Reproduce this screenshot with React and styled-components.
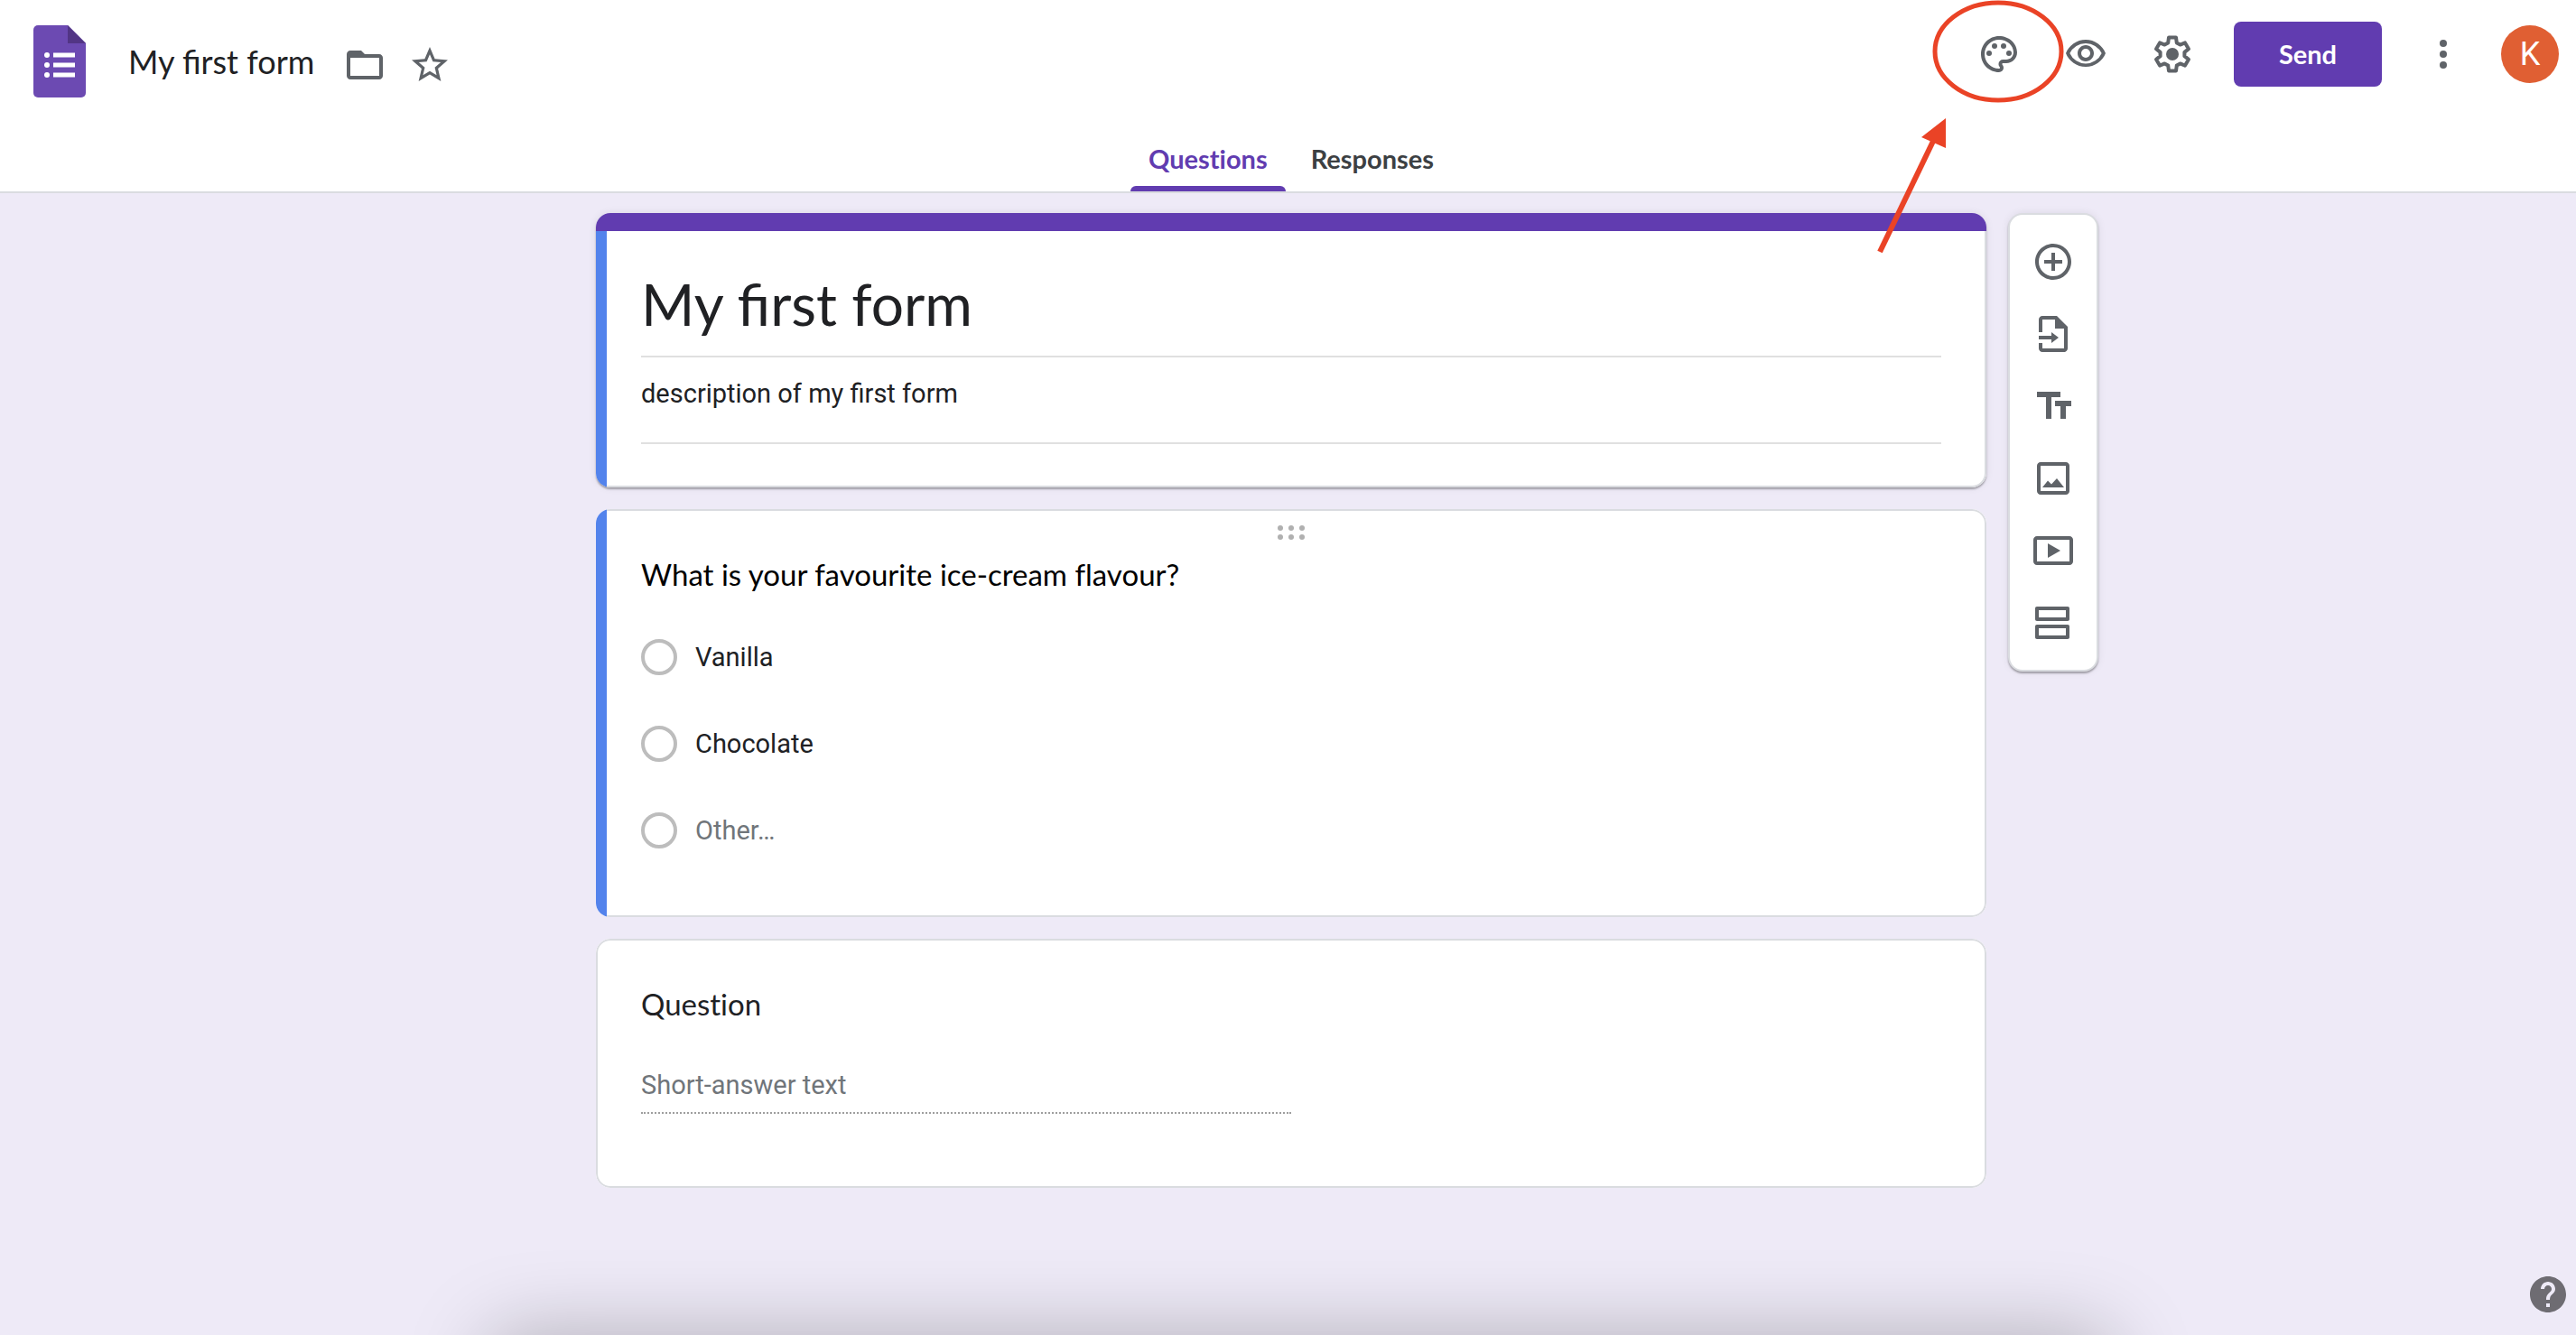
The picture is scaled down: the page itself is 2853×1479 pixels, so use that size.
import React, { useState } from "react";
import styled, { createGlobalStyle, css } from "styled-components";

const color = {
  page: "#eeeaf7",
  surface: "#ffffff",
  accent: "#613cb0",
  selected: "#5383ec",
  border: "#dadce0",
  text: "#202124",
  tabText: "#3c4043",
  muted: "#70757a",
  icon: "#5f6368",
  marker: "#ea4326",
  avatar: "#e05f33",
};

const display = `Lato, "Open Sans", sans-serif`;
const body = `Roboto, "Noto Sans", sans-serif`;

const GlobalStyle = createGlobalStyle`
  *, *::before, *::after { box-sizing: border-box; }
  body { margin: 0; background: ${color.page}; color: ${color.text}; font-family: ${body}; }
  button, input { font: inherit; color: inherit; margin: 0; }
`;

const Page = styled.div`
  position: relative;
  min-height: 100vh;
  overflow: hidden;
`;

const Header = styled.header`
  background: ${color.surface};
  border-bottom: 2px solid ${color.border};
`;

const TopBar = styled.div`
  display: flex;
  justify-content: space-between;
  align-items: flex-start;
  height: 148px;
  padding: 0 19px 0 37px;
`;

const DocumentInfo = styled.div`
  display: flex;
  align-items: center;
  padding-top: 28px;
`;

const HomeLink = styled.a`
  display: block;
  width: 58px;
  height: 80px;
  margin-right: 47px;
`;

const DocumentTitle = styled.input`
  field-sizing: content;
  padding: 0;
  border: 0;
  outline: 0;
  background: transparent;
  font: 400 36px/48px ${display};
`;

const DocumentTools = styled.div`
  display: flex;
  gap: 24px;
  padding-top: 8px;
  margin-left: 32px;
`;

const Actions = styled.div`
  display: flex;
  align-items: center;
  gap: 44px;
  height: 120px;
`;

const ActionIcons = styled.div`
  display: flex;
  gap: 48px;
`;

const Account = styled.div`
  display: flex;
  align-items: center;
  gap: 40px;
`;

const IconButton = styled.button`
  display: flex;
  align-items: center;
  justify-content: center;
  width: ${(p) => p.$width || 48}px;
  height: ${(p) => p.$height || 48}px;
  padding: 0;
  border: 0;
  background: transparent;
  color: ${color.icon};
  cursor: pointer;
`;

const Svg = styled.svg`
  display: block;
  width: 48px;
  height: 48px;
  fill: currentColor;
`;

const SendButton = styled.button`
  width: 164px;
  height: 72px;
  padding: 0;
  border: 0;
  border-radius: 8px;
  background: ${color.accent};
  color: #fff;
  font: 700 29px/40px ${display};
  cursor: pointer;
`;

const Avatar = styled.button`
  width: 64px;
  height: 64px;
  padding: 0;
  border: 0;
  border-radius: 50%;
  background: ${color.avatar};
  color: #fff;
  font: 400 36px/64px ${body};
  cursor: pointer;
`;

const Tabs = styled.nav`
  display: flex;
  justify-content: center;
  gap: 8px;
  height: 64px;
  padding-left: 7px;
`;

const Tab = styled.a`
  position: relative;
  display: flex;
  align-items: center;
  padding: 0 20px 8px;
  color: ${(p) => (p.$active ? color.accent : color.tabText)};
  font: 700 29px/40px ${display};
  font-variant-ligatures: none;
  text-decoration: none;
  ${(p) =>
    p.$active &&
    css`
      &::after {
        content: "";
        position: absolute;
        left: 0;
        right: 0;
        bottom: 0;
        height: 6px;
        border-radius: 6px 6px 0 0;
        background: ${color.accent};
      }
    `}
`;

const Workspace = styled.main`
  display: grid;
  grid-template-columns: 1fr minmax(0, 1540px) 1fr;
  align-items: start;
  padding: 22px 0 24px 7px;
`;

const Cards = styled.div`
  grid-column: 2;
  display: flex;
  flex-direction: column;
  gap: 24px;
`;

const raised = css`
  box-shadow: 0 2px 2px rgba(0, 0, 0, 0.3), 0 0 10px rgba(0, 0, 0, 0.08);
`;

const Card = styled.section`
  display: grid;
  grid-template-columns: ${(p) => (p.$marked ? "12px 1fr" : "1fr")};
  overflow: hidden;
  border-radius: 16px;
  background: ${color.surface};
  ${(p) => p.$raised && raised}
`;

const ThemeBar = styled.div`
  grid-column: 1 / -1;
  height: 20px;
  background: ${color.accent};
`;

const Marker = styled.div`
  background: ${color.selected};
`;

const HeadBody = styled.div`
  padding: 40px 48px 46px 38px;
  border: solid ${color.border};
  border-width: 0 2px 2px 0;
  border-radius: 0 0 16px 0;
`;

const ChoiceBody = styled.div`
  padding: 16px 48px 74px 38px;
  border: solid ${color.border};
  border-width: 2px 2px 2px 0;
  border-radius: 0 16px 16px 0;
`;

const ShortBody = styled.div`
  padding: 46px 48px 80px;
  border: 2px solid ${color.border};
  border-radius: 16px;
`;

const LineInput = styled.input`
  display: block;
  width: 100%;
  padding: 0;
  border: 0;
  border-bottom: 2px solid #e0e0e0;
  outline: 0;
  background: transparent;
`;

const FormTitle = styled(LineInput)`
  height: 100px;
  padding-bottom: 18px;
  font: 400 64px/80px ${display};
`;

const FormDescription = styled(LineInput)`
  height: 76px;
  margin-top: 20px;
  padding-bottom: 34px;
  font: 400 29px/40px ${body};
`;

const DragHandle = styled.button`
  display: block;
  width: 30px;
  height: 16px;
  margin: 0 auto 14px;
  padding: 0;
  border: 0;
  background: transparent;
  color: #b0b0b0;
  cursor: move;
`;

const HandleDots = styled.svg`
  display: block;
  width: 30px;
  height: 16px;
  fill: currentColor;
`;

const QuestionTitle = styled.h2`
  margin: 0;
  color: ${(p) => (p.$strong ? "#000" : color.text)};
  font: 400 33px/48px ${display};
  font-variant-ligatures: none;
`;

const Options = styled.div`
  display: flex;
  flex-direction: column;
  align-items: flex-start;
  gap: 56px;
  margin-top: 48px;
`;

const Option = styled.label`
  display: flex;
  align-items: center;
  gap: 20px;
  color: ${(p) => (p.$muted ? color.muted : color.text)};
  font: 400 29px/40px ${body};
`;

const Radio = styled.input`
  appearance: none;
  width: 40px;
  height: 40px;
  border: 4px solid #bdbdbd;
  border-radius: 50%;
  background: ${color.surface};
  &:checked {
    border-color: ${color.accent};
    background: radial-gradient(${color.accent} 0 9px, transparent 10px);
  }
`;

const ShortAnswer = styled(LineInput)`
  width: 50%;
  height: 52px;
  margin-top: 46px;
  padding-bottom: 10px;
  border-bottom: 2px dotted #9e9e9e;
  font: 400 29px/40px ${body};
  &::placeholder {
    color: ${color.muted};
    opacity: 1;
  }
`;

const Toolbox = styled.aside`
  grid-column: 3;
  justify-self: start;
  display: flex;
  flex-direction: column;
  margin-left: 24px;
  padding: 12px 18px;
  border: 2px solid ${color.border};
  border-radius: 16px;
  background: ${color.surface};
  ${raised}
`;

const HelpButton = styled(IconButton)`
  position: fixed;
  right: 7px;
  bottom: 21px;
  color: #6e6c72;
`;

const BottomShade = styled.div`
  position: fixed;
  top: 100%;
  left: 19%;
  right: 18%;
  height: 120px;
  border-radius: 24px;
  box-shadow: 0 0 90px rgba(0, 0, 0, 0.26);
  pointer-events: none;
`;

const Annotation = styled.svg`
  position: absolute;
  top: 0;
  right: 563px;
  width: 220px;
  height: 290px;
  pointer-events: none;
`;

const Icon = ({ children }) => (
  <Svg viewBox="0 0 24 24" aria-hidden="true">
    {children}
  </Svg>
);

const FolderIcon = () => (
  <Icon>
    <path d="M20 6h-8l-2-2H4c-1.1 0-2 .9-2 2v12c0 1.1.9 2 2 2h16c1.1 0 2-.9 2-2V8c0-1.1-.9-2-2-2zm0 12H4V8h16v10z" />
  </Icon>
);

const StarIcon = () => (
  <Icon>
    <path d="M22 9.24l-7.19-.62L12 2 9.19 8.63 2 9.24l5.46 4.73L5.82 21 12 17.27 18.18 21l-1.63-7.03L22 9.24zM12 15.4l-3.76 2.27 1-4.28-3.32-2.88 4.38-.38L12 6.1l1.71 4.04 4.38.38-3.32 2.88 1 4.28L12 15.4z" />
  </Icon>
);

const PaletteIcon = () => (
  <Icon>
    <path d="M12 22C6.49 22 2 17.51 2 12S6.49 2 12 2s10 4.04 10 9c0 3.31-2.69 6-6 6h-1.77c-.28 0-.5.22-.5.5 0 .12.05.23.13.33.41.47.64 1.06.64 1.67A2.5 2.5 0 0 1 12 22zm0-18c-4.41 0-8 3.59-8 8s3.59 8 8 8c.28 0 .5-.22.5-.5a.54.54 0 0 0-.14-.35c-.41-.46-.63-1.05-.63-1.65a2.5 2.5 0 0 1 2.5-2.5H16c2.21 0 4-1.79 4-4 0-3.86-3.59-7-8-7z" />
    <circle cx="6.5" cy="11.5" r="1.5" />
    <circle cx="9.5" cy="7.5" r="1.5" />
    <circle cx="14.5" cy="7.5" r="1.5" />
    <circle cx="17.5" cy="11.5" r="1.5" />
  </Icon>
);

const EyeIcon = () => (
  <Icon>
    <path d="M12 6a9.77 9.77 0 0 1 8.82 5.5 9.647 9.647 0 0 1-17.64 0A9.77 9.77 0 0 1 12 6m0-2C7 4 2.73 7.11 1 11.5 2.73 15.89 7 19 12 19s9.27-3.11 11-7.5C21.27 7.11 17 4 12 4zm0 5a2.5 2.5 0 0 1 0 5 2.5 2.5 0 0 1 0-5m0-2c-2.48 0-4.5 2.02-4.5 4.5S9.52 16 12 16s4.5-2.02 4.5-4.5S14.48 7 12 7z" />
  </Icon>
);

const GearIcon = () => (
  <Icon>
    <path
      fill="none"
      stroke="currentColor"
      strokeWidth="2"
      strokeLinejoin="round"
      d="M10 2.8H14L14.4 5.7L16.3 6.8L19 5.7L21 9.1L18.7 10.9V13.1L21 14.9L19 18.3L16.3 17.2L14.4 18.3L14 21.2H10L9.6 18.3L7.7 17.2L5 18.3L3 14.9L5.3 13.1V10.9L3 9.1L5 5.7L7.7 6.8L9.6 5.7Z"
    />
    <circle cx="12" cy="12" r="3.5" />
  </Icon>
);

const MoreIcon = () => (
  <Icon>
    <circle cx="12" cy="6" r="2" />
    <circle cx="12" cy="12" r="2" />
    <circle cx="12" cy="18" r="2" />
  </Icon>
);

const AddIcon = () => (
  <Icon>
    <path d="M13 7h-2v4H7v2h4v4h2v-4h4v-2h-4V7zm-1-5C6.48 2 2 6.48 2 12s4.48 10 10 10 10-4.48 10-10S17.52 2 12 2zm0 18c-4.41 0-8-3.59-8-8s3.59-8 8-8 8 3.59 8 8-3.59 8-8 8z" />
  </Icon>
);

const ImportIcon = () => (
  <Icon>
    <path d="M14 2H6c-1.1 0-2 .9-2 2v7h2V4h7v5h5v11H6v-3H4v3c0 1.1.9 2 2 2h12c1.1 0 2-.9 2-2V8l-6-6z" />
    <path d="M4 13h7v-2l4 3-4 3v-2H4z" />
  </Icon>
);

const TitleIcon = () => (
  <Icon>
    <path d="M3 4v3h5v12h3V7h5V4H3zm19 5h-9v3h3v7h3v-7h3V9z" />
  </Icon>
);

const ImageIcon = () => (
  <Icon>
    <path d="M19 3H5c-1.1 0-2 .9-2 2v14c0 1.1.9 2 2 2h14c1.1 0 2-.9 2-2V5c0-1.1-.9-2-2-2zm0 16H5V5h14v14z" />
    <path d="M6 17l3-3.8 2 2 3-3.2 4 5z" />
  </Icon>
);

const VideoIcon = () => (
  <Icon>
    <path d="M21 4H3c-1.1 0-2 .9-2 2v12c0 1.1.9 2 2 2h18c1.1 0 2-.9 2-2V6c0-1.1-.9-2-2-2zm0 14H3V6h18v12z" />
    <path d="M9 8v8l7-4z" />
  </Icon>
);

const SectionIcon = () => (
  <Icon>
    <path d="M20 3H3c-.6 0-1 .4-1 1v6c0 .6.4 1 1 1h17c.6 0 1-.4 1-1V4c0-.6-.4-1-1-1zm-1 6H4V5h15v4z" />
    <path d="M20 13H3c-.6 0-1 .4-1 1v6c0 .6.4 1 1 1h17c.6 0 1-.4 1-1v-6c0-.6-.4-1-1-1zm-1 6H4v-4h15v4z" />
  </Icon>
);

const HelpIcon = () => (
  <Icon>
    <path d="M12 2C6.48 2 2 6.48 2 12s4.48 10 10 10 10-4.48 10-10S17.52 2 12 2zm1 17h-2v-2h2v2zm2.07-7.75l-.9.92C13.45 12.9 13 13.5 13 15h-2v-.5c0-1.1.45-2.1 1.17-2.83l1.24-1.26c.37-.36.59-.86.59-1.41 0-1.1-.9-2-2-2s-2 .9-2 2H8c0-2.21 1.79-4 4-4s4 1.79 4 4c0 .88-.36 1.68-.93 2.25z" />
  </Icon>
);

const FormsLogo = () => (
  <svg width="58" height="80" viewBox="0 0 58 80" aria-hidden="true">
    <path fill="#6c4ab2" d="M5 0H38L58 20V75a5 5 0 0 1-5 5H5a5 5 0 0 1-5-5V5a5 5 0 0 1 5-5z" />
    <path fill="#523585" d="M38 0L58 20H38z" />
    <g fill="#fff">
      <circle cx="15" cy="33" r="3" />
      <circle cx="15" cy="44" r="3" />
      <circle cx="15" cy="55" r="3" />
      <path d="M22 30.5h24v5H22zM22 41.5h24v5H22zM22 52.5h24v5H22z" />
    </g>
  </svg>
);

const tools = [
  ["Add question", AddIcon],
  ["Import questions", ImportIcon],
  ["Add title and description", TitleIcon],
  ["Add image", ImageIcon],
  ["Add video", VideoIcon],
  ["Add section", SectionIcon],
];

const options = [
  { label: "Vanilla" },
  { label: "Chocolate" },
  { label: "Other…", muted: true },
];

export default function App() {
  const [title, setTitle] = useState("My first form");
  const [description, setDescription] = useState("description of my first form");
  const rename = (e) => setTitle(e.target.value);

  return (
    <Page>
      <GlobalStyle />
      <Header>
        <TopBar>
          <DocumentInfo>
            <HomeLink href="#home" aria-label="Forms home">
              <FormsLogo />
            </HomeLink>
            <DocumentTitle aria-label="Document title" value={title} onChange={rename} />
            <DocumentTools>
              <IconButton aria-label="Move to folder"><FolderIcon /></IconButton>
              <IconButton aria-label="Star"><StarIcon /></IconButton>
            </DocumentTools>
          </DocumentInfo>
          <Actions>
            <ActionIcons>
              <IconButton aria-label="Customise theme"><PaletteIcon /></IconButton>
              <IconButton aria-label="Preview"><EyeIcon /></IconButton>
              <IconButton aria-label="Settings"><GearIcon /></IconButton>
            </ActionIcons>
            <SendButton>Send</SendButton>
            <Account>
              <IconButton aria-label="More"><MoreIcon /></IconButton>
              <Avatar aria-label="Account K">K</Avatar>
            </Account>
          </Actions>
        </TopBar>
        <Tabs>
          <Tab href="#questions" $active aria-current="page">Questions</Tab>
          <Tab href="#responses">Responses</Tab>
        </Tabs>
      </Header>

      <Workspace>
        <Cards>
          <Card $marked $raised>
            <ThemeBar />
            <Marker />
            <HeadBody>
              <FormTitle aria-label="Form title" value={title} onChange={rename} />
              <FormDescription
                aria-label="Form description"
                value={description}
                onChange={(e) => setDescription(e.target.value)}
              />
            </HeadBody>
          </Card>

          <Card $marked>
            <Marker />
            <ChoiceBody>
              <DragHandle aria-label="Move question">
                <HandleDots viewBox="0 0 30 16" aria-hidden="true">
                  {[3, 15, 27].map((x) => (
                    <React.Fragment key={x}>
                      <circle cx={x} cy="3" r="3" />
                      <circle cx={x} cy="13" r="3" />
                    </React.Fragment>
                  ))}
                </HandleDots>
              </DragHandle>
              <QuestionTitle $strong id="flavour">What is your favourite ice-cream flavour?</QuestionTitle>
              <Options role="radiogroup" aria-labelledby="flavour">
                {options.map((option) => (
                  <Option key={option.label} $muted={option.muted}>
                    <Radio type="radio" name="flavour" />
                    {option.label}
                  </Option>
                ))}
              </Options>
            </ChoiceBody>
          </Card>

          <Card>
            <ShortBody>
              <QuestionTitle id="short-question">Question</QuestionTitle>
              <ShortAnswer aria-labelledby="short-question" placeholder="Short-answer text" />
            </ShortBody>
          </Card>
        </Cards>

        <Toolbox aria-label="Add to form">
          {tools.map(([label, Glyph]) => (
            <IconButton key={label} aria-label={label} $width={60} $height={80}>
              <Glyph />
            </IconButton>
          ))}
        </Toolbox>
      </Workspace>

      <BottomShade />
      <HelpButton aria-label="Help"><HelpIcon /></HelpButton>

      <Annotation viewBox="0 0 220 290" aria-hidden="true">
        <ellipse cx="143" cy="57" rx="70" ry="54" fill="none" stroke={color.marker} strokeWidth="5" />
        <path d="M12 279L76 146" fill="none" stroke={color.marker} strokeWidth="6" />
        <path d="M85 131L58 152L85 164z" fill={color.marker} />
      </Annotation>
    </Page>
  );
}
